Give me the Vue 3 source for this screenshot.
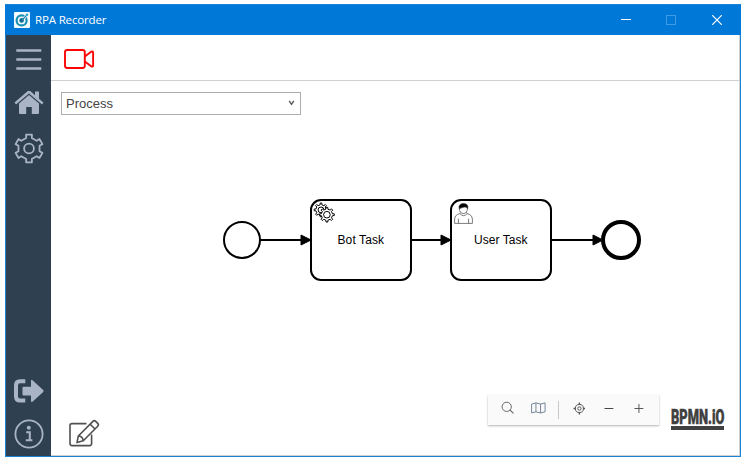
<script setup>
function gear(cx, cy, teeth, outer, inner, tip = 0.2, root = 0.3) {
  const step = (Math.PI * 2) / teeth
  const pts = []
  const at = (a, r) => pts.push(`${(cx + Math.sin(a) * r).toFixed(2)},${(cy - Math.cos(a) * r).toFixed(2)}`)
  for (let i = 0; i < teeth; i++) {
    const a = i * step
    at(a - step * root, inner)
    at(a - step * tip, outer)
    at(a + step * tip, outer)
    at(a + step * root, inner)
  }
  return `M${pts.join('L')}Z`
}

const settingsGear = gear(15, 15.5, 6, 14.1, 10.9, 0.2, 0.25)
const backGear = gear(321, 209.9, 8, 6.9, 5.1, 0.15, 0.23)
const frontGear = gear(326.9, 214.7, 8, 7.4, 5.6, 0.15, 0.23)

const tasks = [
  { x: 311, label: 'Bot Task', tx: 337.5, tw: 46.5 },
  { x: 451, label: 'User Task', tx: 474, tw: 53.5 },
]
const flows = [
  [260, 311],
  [411, 451],
  [551, 603],
]
</script>

<template>
  <div class="window">
    <header class="titlebar">
      <svg class="app-icon" width="16" height="16" viewBox="0 0 16 16">
        <rect width="16" height="16" rx="1" fill="#f4fbfe" />
        <circle cx="7.6" cy="8.4" r="5" fill="none" stroke="#168fb5" stroke-width="2.2" />
        <path d="M9 7 13.6 2.4" stroke="#f4fbfe" stroke-width="2.6" />
        <circle cx="7.6" cy="8.4" r="2.3" fill="#126e96" />
        <path d="M8 8 12.5 3.5" stroke="#1685aa" stroke-width="1.1" />
        <circle cx="13" cy="2.8" r="1.3" fill="#29a9ca" />
      </svg>
      <span class="title">RPA Recorder</span>
      <div class="controls">
        <svg width="10" height="10" viewBox="0 0 10 10"><path d="M0 4.5H10" stroke="#fff" /></svg>
        <svg width="10" height="10" viewBox="0 0 10 10"><rect x=".5" y=".5" width="9" height="9" fill="none" stroke="#3d9ae3" /></svg>
        <svg width="10" height="10" viewBox="0 0 10 10"><path d="M.2.2 9.8 9.8M9.8.2.2 9.8" stroke="#fff" stroke-width="1.2" /></svg>
      </div>
    </header>

    <div class="body">
      <nav class="sidebar">
        <svg class="menu" width="26" height="22" viewBox="0 0 26 22">
          <path d="M.3 1.5H25.3M.3 10.5H25.3M.3 19.5H25.3" stroke="#a9b4c6" stroke-width="2.7" />
        </svg>
        <svg class="home" width="30" height="25" viewBox="0 0 30 25" fill="#a9b4c6">
          <path d="M.5 12.6 13.5 1.3Q15 .1 16.5 1.3L21 5.2V1.5H25V8.7L29.5 12.6 28 14.5 15 3.4 2 14.5Z" />
          <path d="M5 13.6 15 5.1 25 13.6V23Q25 24 24 24H17.8V17H12.2V24H6Q5 24 5 23Z" />
        </svg>
        <svg class="settings" width="30" height="31" viewBox="0 0 30 31" fill="none" stroke="#a9b4c6" stroke-width="1.8" stroke-linejoin="round">
          <path :d="settingsGear" />
          <circle cx="15" cy="15.5" r="4.9" />
        </svg>
        <div class="grow"></div>
        <svg class="exit" width="30" height="24" viewBox="0 0 30 24">
          <path d="M11.3 2.2H6Q2 2.2 2 6.2V17.6Q2 21.6 6 21.6H11.3" fill="none" stroke="#a9b4c6" stroke-width="4" />
          <path d="M9.5 7.8H17V2Q17 .2 18.5 1.2L29.2 11Q30 12 29.2 13L18.5 22.7Q17 23.7 17 22V16.4H9.5Q8.5 16.4 8.5 15.4V8.8Q8.5 7.8 9.5 7.8Z" fill="#a9b4c6" />
        </svg>
        <svg class="info" width="30" height="30" viewBox="0 0 30 30" fill="none" stroke="#a9b4c6">
          <circle cx="15" cy="15" r="13.6" stroke-width="1.8" />
          <circle cx="14.8" cy="8.8" r="2" fill="#a9b4c6" stroke="none" />
          <path d="M12.2 13.3H15.8V21M11.8 21.2H18.4" stroke-width="2" />
        </svg>
      </nav>

      <main class="content">
        <div class="toolbar">
          <svg width="32" height="22" viewBox="0 0 32 22" fill="none" stroke="#fb0606" stroke-width="1.9" stroke-linejoin="round">
            <rect x="2" y="2" width="19.8" height="18" rx="2.2" />
            <path d="M21.8 8.6 28.5 3.6Q30.1 2.8 30.1 4.6V17.4Q30.1 19.2 28.5 18.4L21.8 13.4" />
          </svg>
        </div>

        <div class="stage">
          <svg class="diagram" width="688" height="374" viewBox="51 81 688 374">
            <defs>
              <marker id="flow-end" viewBox="0 0 20 20" refX="11" refY="10" markerWidth="10" markerHeight="10" orient="auto">
                <path d="M1 5 11 10 1 15Z" stroke="#000" stroke-width="1" />
              </marker>
            </defs>
            <circle cx="242" cy="240" r="18" fill="#fff" stroke="#000" stroke-width="2" />
            <circle cx="621" cy="240" r="18" fill="#fff" stroke="#000" stroke-width="4" />
            <g v-for="t in tasks" :key="t.label">
              <rect :x="t.x" y="200" width="100" height="80" rx="10" fill="#fff" stroke="#000" stroke-width="2" />
              <text :x="t.tx" y="244" :textLength="t.tw" class="task-label">{{ t.label }}</text>
            </g>
            <path v-for="f in flows" :key="f[0]" :d="`M${f[0]} 240H${f[1]}`" stroke="#000" stroke-width="2" marker-end="url(#flow-end)" />
            <g fill="#fff" stroke="#000" stroke-width="1">
              <path :d="backGear" />
              <circle cx="321" cy="209.9" r="2.9" />
              <path :d="frontGear" />
              <circle cx="326.9" cy="214.7" r="3.3" />
            </g>
            <g fill="#fff" stroke="#444" stroke-width=".7">
              <path d="M460.6 212.3Q460.7 213.8 457.5 214.5 454.8 215.5 454.6 219V223.4H472.4V219Q472.2 215.5 469.5 214.5 466.3 213.8 466.4 212.3" />
              <path d="M458.4 223.4V218.7M468.6 223.4V218.7M460 213.7Q463.5 217.7 467 213.7" fill="none" />
              <ellipse cx="463.4" cy="208.9" rx="4" ry="4.6" />
              <path d="M459.2 208.8Q458.2 203.8 463 203.6 468.9 203.5 467.7 208.8 466.5 206.4 464.2 207.1 461.2 207.9 459.2 208.8Z" fill="#000" />
            </g>
          </svg>

          <div class="select">
            <span>Process</span>
            <svg width="7" height="6" viewBox="0 0 7 6"><path d="M1.2.8 3.5 4.3 5.8.8" fill="none" stroke="#555" stroke-width="1.4" /></svg>
          </div>

          <footer class="bottom">
            <svg class="edit" width="31" height="29" viewBox="0 0 31 29" fill="none" stroke="#505050" stroke-width="1.6" stroke-linejoin="round">
              <path d="M17.5 4.6H3Q1 4.6 1 6.6V24.6Q1 26.6 3 26.6H20.6Q22.6 26.6 22.6 24.6V15.5" />
              <path d="M8 23.6 9.3 17 23.9 2.4Q25.3 1 26.7 2.4L28.7 4.4Q30.1 5.8 28.7 7.2L14.3 21.8ZM21.2 5.2 26 10M9.3 17Q13.5 17 14.3 21.8" />
            </svg>
            <div class="zoom-panel">
              <svg class="search" width="14" height="14" viewBox="0 0 14 14" fill="none" stroke="#666"><circle cx="5.8" cy="5.8" r="4.7" /><path d="M9.2 9.2 12.7 12.5" stroke-width="1.2" /></svg>
              <svg class="map" width="15" height="12" viewBox="0 0 15 12" fill="none" stroke="#66788c" stroke-width=".9"><path d="M.6 2 5 .8 9.7 2 14.3.8V9.9L9.7 11 5 9.9.6 11ZM5 .8V9.9M9.7 2V11" /></svg>
              <i class="divider"></i>
              <svg class="target" width="13" height="13" viewBox="0 0 13 13" fill="none" stroke="#555"><circle cx="6.5" cy="6.5" r="4.1" /><circle cx="6.5" cy="6.5" r="1.7" /><path d="M6.5.5V2.7M6.5 10.3V12.5M.5 6.5H2.7M10.3 6.5H12.5" stroke-width="1.4" /></svg>
              <svg class="minus" width="10" height="9" viewBox="0 0 10 9"><path d="M.5 4.5H9.5" stroke="#444" /></svg>
              <svg class="plus" width="10" height="9" viewBox="0 0 10 9"><path d="M.5 4.5H9.5M5 0V9" stroke="#555" /></svg>
            </div>
            <svg class="logo" width="54" height="28" viewBox="0 -5 54 28">
              <text x="0" y="17" transform="scale(.58 1)" textLength="92" lengthAdjust="spacingAndGlyphs">BPMN.iO</text>
              <rect y="19" width="53" height="4" fill="#404040" />
            </svg>
          </footer>
        </div>
      </main>
    </div>
  </div>
</template>

<style>
body {
  background: #fff;
}
</style>

<style scoped>
.window {
  box-sizing: border-box;
  width: 736px;
  height: 453px;
  margin: 4px 0 0 5px;
  border: 1px solid #1883d7;
  border-top: 0;
  display: flex;
  flex-direction: column;
  font-family: "Liberation Sans", Arial, sans-serif;
}
.titlebar {
  height: 31px;
  flex: none;
  margin: 0 -1px;
  background: #0078d7;
  border-top: 1px solid #1883d7;
  box-sizing: border-box;
  display: flex;
  align-items: center;
  padding: 0 19px 0 9px;
}
.app-icon {
  flex: none;
  margin: -1px 5px 0 0;
}
.title {
  color: #fff;
  font: 11.5px "Open Sans", "Noto Sans", sans-serif;
  letter-spacing: -0.15px;
  margin-top: -1px;
}
.controls {
  margin-left: auto;
  display: flex;
  gap: 35px;
}
.controls svg {
  display: block;
  margin-top: -1px;
}
.controls svg:last-child {
  margin-left: 1px;
}
.body {
  flex: 1;
  min-height: 0;
  display: flex;
}
.sidebar {
  width: 45px;
  flex: none;
  background: #2f4050;
  display: flex;
  flex-direction: column;
  padding-left: 8px;
  box-sizing: border-box;
}
.sidebar svg {
  flex: none;
}
.menu {
  margin: 14px 0 0 2px;
}
.home {
  margin-top: 19px;
}
.settings {
  margin-top: 18px;
}
.grow {
  flex: 1;
}
.exit {
  margin-bottom: 16px;
}
.info {
  margin-bottom: 7px;
}
.content {
  flex: 1;
  display: flex;
  flex-direction: column;
  border-right: 1px solid #cfcfcf;
  border-bottom: 1px solid #cfcfcf;
}
.toolbar {
  box-sizing: border-box;
  height: 46px;
  flex: none;
  border-bottom: 1px solid #cfcfcf;
  padding: 13px 0 0 12px;
}
.toolbar svg {
  display: block;
}
.stage {
  flex: 1;
  position: relative;
  display: flex;
  flex-direction: column;
  justify-content: space-between;
  align-items: flex-start;
  padding-top: 11px;
}
.diagram {
  position: absolute;
  left: 0;
  top: 0;
}
.task-label {
  font-family: "Liberation Sans", Arial, sans-serif;
  font-size: 12px;
  fill: #000;
}
.select {
  position: relative;
  box-sizing: border-box;
  width: 240px;
  height: 23px;
  margin-left: 10px;
  border: 1px solid #abadb3;
  padding: 0 5px 0 4px;
  display: flex;
  align-items: center;
  justify-content: space-between;
  font-size: 13px;
  color: #444;
  background: #fff;
}
.select svg {
  margin-top: -2px;
}
.bottom {
  position: relative;
  width: 100%;
  height: 60px;
  display: flex;
  align-items: flex-start;
}
.edit {
  margin: 24px 0 0 18px;
}
.zoom-panel {
  width: 171px;
  height: 30px;
  margin-left: auto;
  box-sizing: border-box;
  padding: 0 15px 4px 13px;
  display: flex;
  align-items: center;
  background: #fafafa;
  box-shadow: 0 1px 2px rgba(0, 0, 0, 0.3);
}
.map {
  margin-left: 16px;
}
.divider {
  width: 1px;
  height: 18px;
  margin: 4px 14px 0 12px;
  background: #c8c8c8;
}
.minus {
  margin-left: 19px;
}
.plus {
  margin-left: 20px;
}
.logo {
  margin: 7px 14px 0 12px;
}
.logo text {
  font: 900 20.5px "Roboto", "Liberation Sans", sans-serif;
  fill: #404040;
  stroke: #404040;
  stroke-width: 0.5px;
}
</style>
